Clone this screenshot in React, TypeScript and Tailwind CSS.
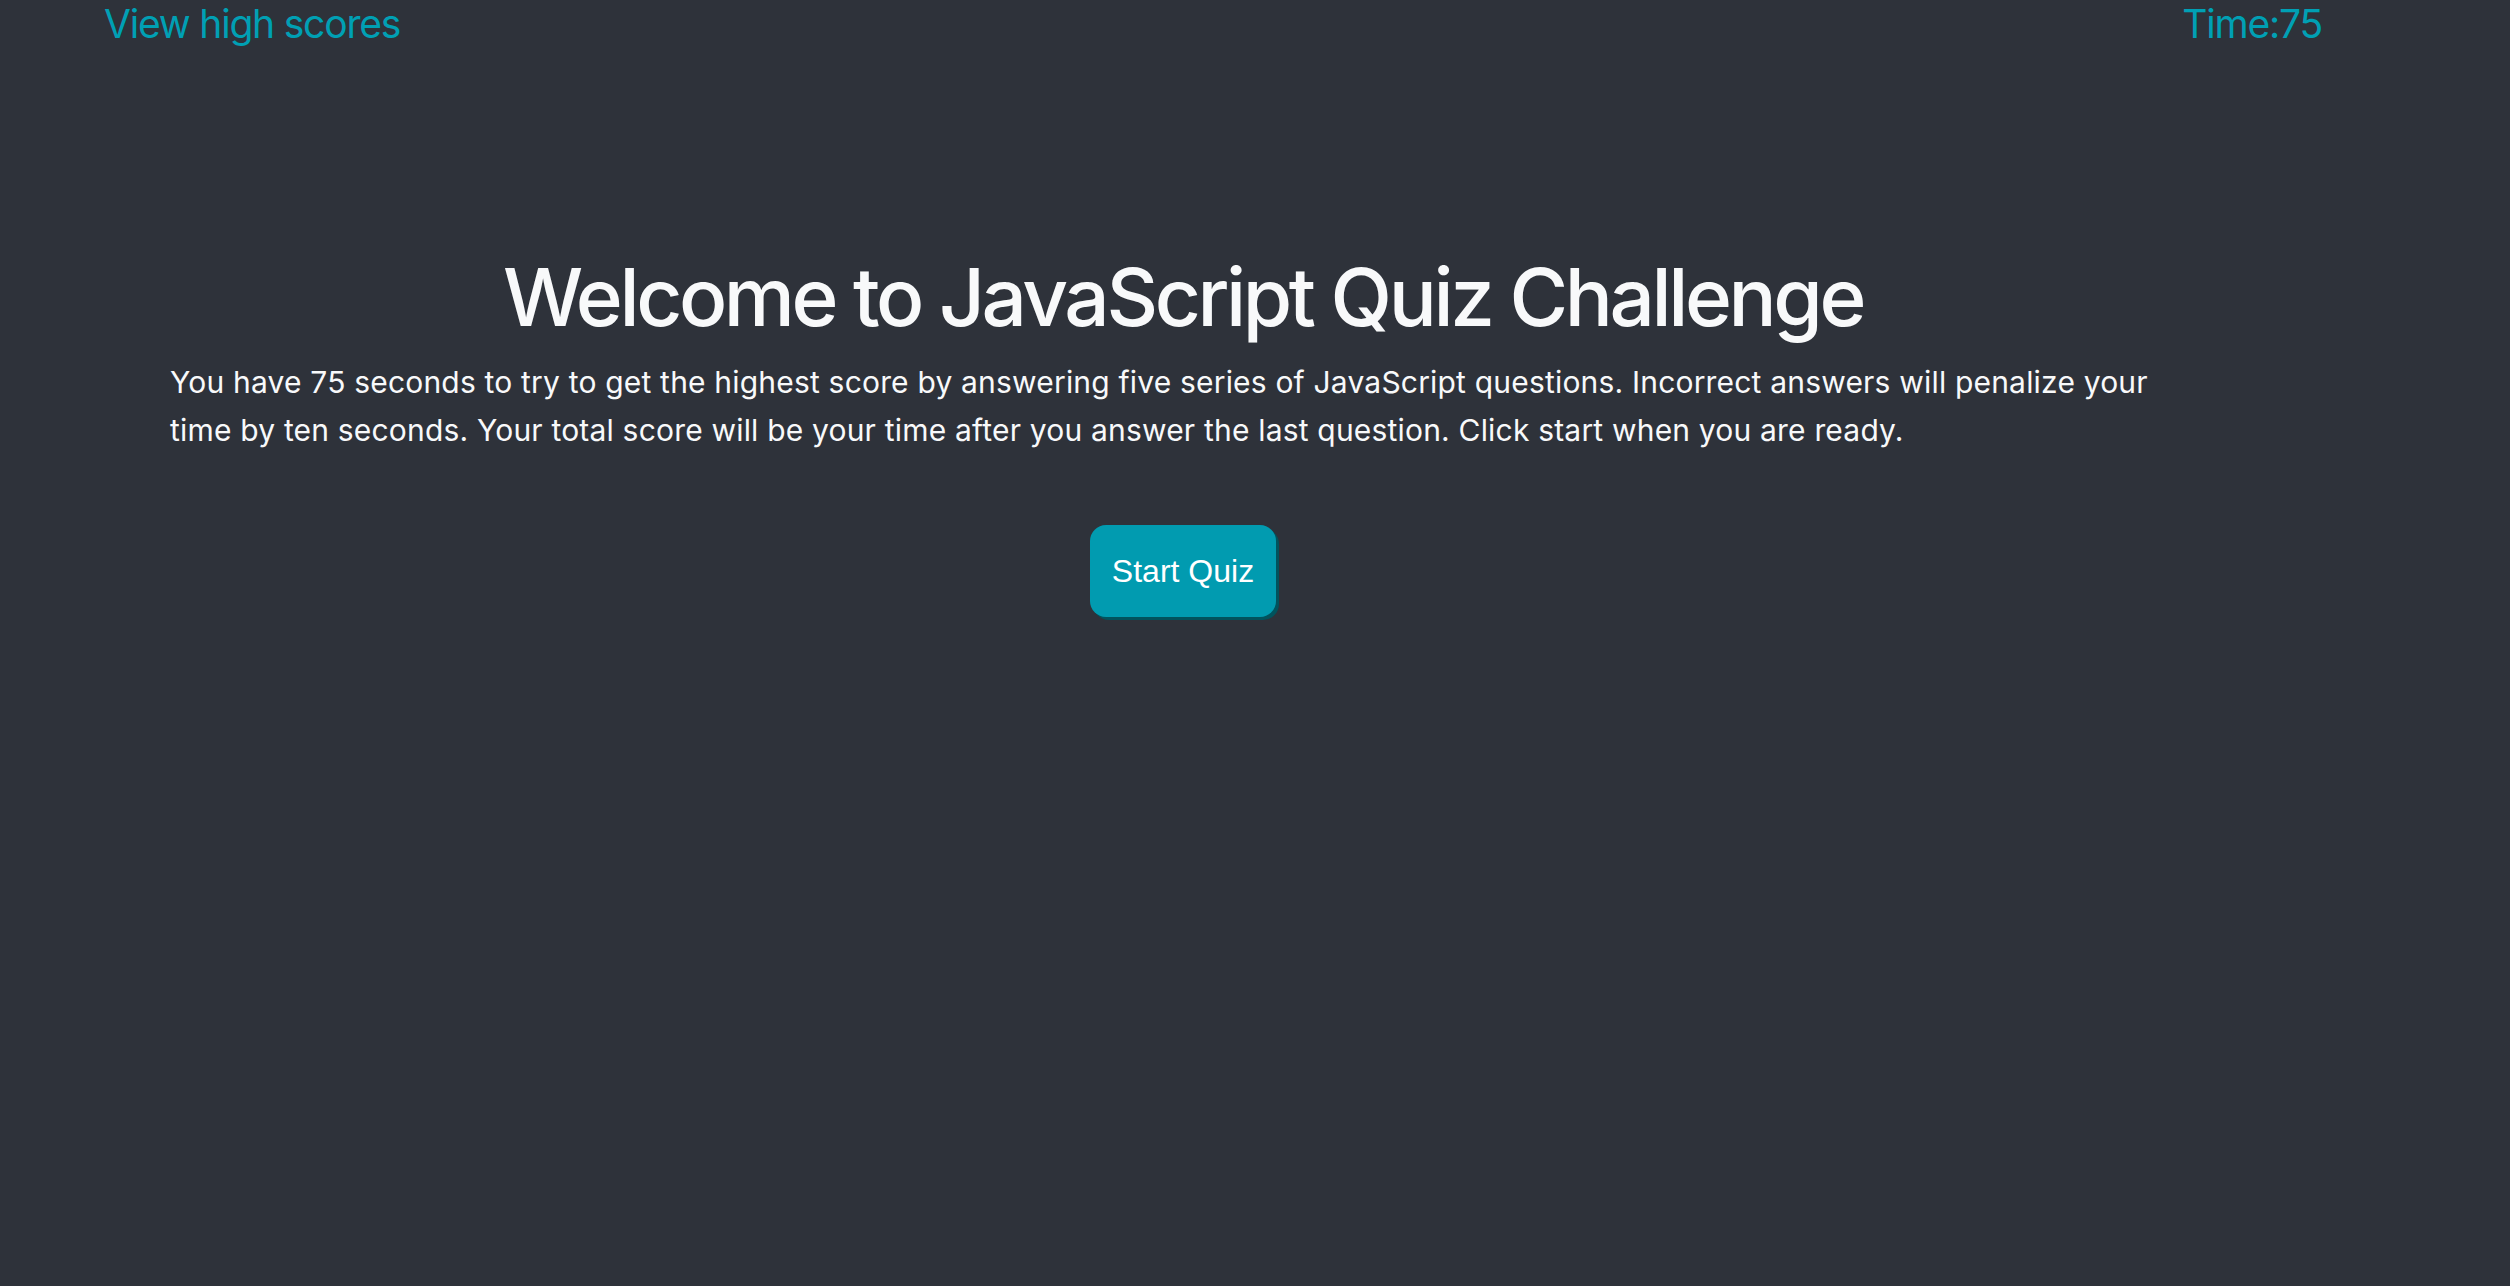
import React from "react";

export default function App() {
  return (
    <div className="min-h-screen w-full bg-[#2e323a] font-['Inter',sans-serif] text-[#f8f9fa]">
      <header className="flex justify-between pl-[104px] pr-[188px] pt-0 text-[39px] leading-[48px] tracking-[-1.2px] text-[#00a0b4]">
        <a href="#" className="no-underline">View high scores</a>
        <span>Time:75</span>
      </header>
      <main className="ml-[170px] w-[2026px] pt-[201px]">
        <h1 className="text-center text-[80px] leading-[96px] font-medium tracking-[-3.4px]">
          Welcome to JavaScript Quiz Challenge
        </h1>
        <p className="mt-[13px] text-[30px] leading-[48px] tracking-[0.19px]">
          You have 75 seconds to try to get the highest score by answering five series of JavaScript questions. Incorrect answers will penalize your time by ten seconds. Your total score will be your time after you answer the last question. Click start when you are ready.
        </p>
        <div className="flex justify-center pt-[71px]">
          <button className="rounded-[16px] bg-[#019bb0] px-[22px] py-[28px] font-['Liberation_Sans',Arial,sans-serif] text-[32px] leading-[36px] text-white shadow-[3px_3px_0_#01535d]">
            Start Quiz
          </button>
        </div>
      </main>
    </div>
  );
}
